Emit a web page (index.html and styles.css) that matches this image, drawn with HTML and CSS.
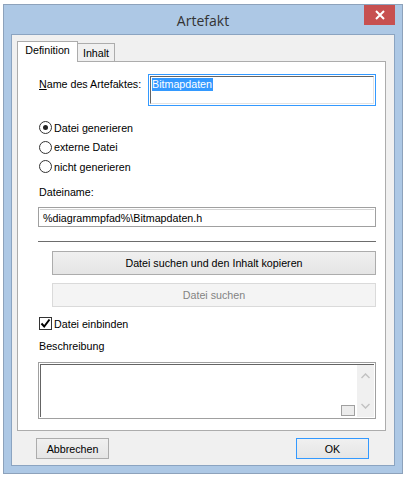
FILE: index.html
```html
<!DOCTYPE html>
<html lang="de">
<head>
<meta charset="UTF-8">
<meta name="viewport" content="width=device-width, initial-scale=1.0">
<link rel="stylesheet" href="styles.css">
</head>
<body>
<div class="window">
    <div class="titlebar">
        <span class="title">Artefakt</span>
        <div class="close">
            <svg width="10" height="10" viewBox="0 0 10 10"><path d="M1 1 L9 9 M9 1 L1 9" stroke="#fff" stroke-width="2"/></svg>
        </div>
    </div>
    <div class="client">
        <div class="tabs">
            <div class="tab active">Definition</div>
            <div class="tab">Inhalt</div>
        </div>
        <div class="panel">
            <div class="name-row">
                <div class="name-label"><u>N</u>ame des Artefaktes:</div>
                <div class="field focus name-field">
                    <div class="field-inner"><span class="sel">Bitmapdaten</span></div>
                </div>
            </div>

            <div class="radios">
                <div class="radio"><span class="circle checked"></span>Datei generieren</div>
                <div class="radio"><span class="circle"></span>externe Datei</div>
                <div class="radio"><span class="circle"></span>nicht generieren</div>
            </div>

            <div class="label file-label">Dateiname:</div>
            <div class="field file-field">
                <div class="field-inner">%diagrammpfad%\Bitmapdaten.h</div>
            </div>

            <div class="sep"></div>

            <div class="btn wide first">Datei suchen und den Inhalt kopieren</div>
            <div class="btn wide disabled">Datei suchen</div>

            <div class="check">
                <span class="box">
                    <svg width="11" height="11" viewBox="0 0 11 11"><path d="M1.5 5.5 L4.2 8.5 L9.5 1.5" stroke="#000" stroke-width="2" fill="none"/></svg>
                </span>Datei einbinden
            </div>

            <div class="label desc-label">Beschreibung</div>
            <div class="field memo">
                <div class="field-inner memo-inner">
                    <div class="memo-text"></div>
                    <div class="scrollbar">
                        <svg width="9" height="6" viewBox="0 0 9 6"><path d="M0.5 5 L4.5 1 L8.5 5" stroke="#c2c2c2" stroke-width="1.5" fill="none"/></svg>
                        <svg width="9" height="6" viewBox="0 0 9 6"><path d="M0.5 1 L4.5 5 L8.5 1" stroke="#c2c2c2" stroke-width="1.5" fill="none"/></svg>
                    </div>
                    <div class="grip"></div>
                </div>
            </div>
        </div>

        <div class="footer">
            <div class="btn small">Abbrechen</div>
            <div class="btn small default">OK</div>
        </div>
    </div>
</div>
</body>
</html>
```

FILE: styles.css
```css
* {
   box-sizing: border-box;
}

body {
   margin: 0;
   background: #fff;
   font-family: "Liberation Sans", Arial, sans-serif;
   font-size: 10.7px;
   color: #000;
}

.window {
   width: 400px;
   height: 470px;
   margin: 4px 0 0 3px;
   border: 1px solid #8da2bb;
   background: #adc8e5;
   padding: 0 7px 7px 7px;
}

.titlebar {
   height: 29px;
   display: grid;
   grid-template-columns: 31px 1fr 31px;
}

.title {
   grid-column: 2;
   text-align: center;
   font-family: "Open Sans", sans-serif;
   font-size: 14px;
   line-height: 29px;
   padding-top: 1px;
   color: #333;
}

.close {
   grid-column: 3;
   height: 20px;
   background: #c75050;
   display: flex;
   align-items: center;
   justify-content: center;
}

.client {
   height: 432px;
   border: 1px solid #8ba4c1;
   background: #f0f0f0;
   padding: 0 8px 0 5px;
}

.tabs {
   display: flex;
   align-items: flex-end;
   height: 20px;
   margin-top: 6px;
}

.tab {
   border: 1px solid #acacac;
   border-bottom: none;
   height: 18px;
   width: 38px;
   text-align: center;
   line-height: 17px;
   background: #f0f0f0;
   padding-top: 1px;
}

.tab.active {
   position: relative;
   z-index: 1;
   width: 61px;
   height: 21px;
   margin-bottom: -1px;
   margin-right: -1px;
   background: #fff;
   padding-top: 0;
   line-height: 17px;
}

.panel {
   height: 370px;
   border: 1px solid #acacac;
   background: #fff;
   padding: 0 9px 0 20px;
}

.name-row {
   display: flex;
   padding-top: 12px;
}

.name-label {
   width: 110px;
   padding: 4px 0 0 1px;
   line-height: 13px;
}

.field {
   border: 1px solid #a0a0a0;
   padding: 1px;
   background: #fff;
}

.field.focus {
   border-color: #3399ff;
}

.field-inner {
   height: 100%;
   border-top: 1px solid #646464;
   border-left: 1px solid #646464;
   border-right: 1px solid #e3e3e3;
   border-bottom: 1px solid #e3e3e3;
   padding: 1px 0 0 1px;
   line-height: 13px;
   white-space: nowrap;
}

.name-field {
   width: 228px;
   height: 32px;
}

.sel {
   display: inline-block;
   background: #3399ff;
   color: #fff;
   line-height: 13px;
   padding: 0 1px 0 0;
}

.radios {
   margin-top: 12px;
}

.radio {
   height: 19.5px;
   display: flex;
   align-items: center;
}

.circle {
   width: 13px;
   height: 13px;
   border: 1px solid #333;
   border-radius: 50%;
   background: #fff;
   margin: 0 2px 0 1px;
   display: flex;
   align-items: center;
   justify-content: center;
}

.circle.checked::after {
   content: "";
   width: 5px;
   height: 5px;
   border-radius: 50%;
   background: #222;
}

.label {
   line-height: 14px;
   padding-left: 1px;
}

.file-label {
   margin-top: 8.5px;
}

.file-field {
   margin-top: 8px;
   height: 20px;
}

.file-field .field-inner {
   border: none;
   padding: 1px 0 0 3px;
   line-height: 14px;
   border-top: 1px solid #d5d5d5;
}

.sep {
   margin-top: 14px;
   height: 1px;
   background: #6d6d6d;
}

.btn {
   display: flex;
   align-items: center;
   justify-content: center;
   border: 1px solid #acacac;
   background: linear-gradient(#f0f0f0, #e5e5e5);
}

.btn.wide {
   height: 24px;
   margin-left: 14px;
}

.btn.first {
   margin-top: 9px;
}

.btn.disabled {
   margin-top: 8px;
   background: #f4f4f4;
   border-color: #dadada;
   color: #838383;
}

.check {
   margin-top: 9px;
   height: 15px;
   display: flex;
   align-items: center;
}

.box {
   width: 13px;
   height: 13px;
   border: 1px solid #333;
   background: #fff;
   margin: 0 2px 0 1px;
   display: flex;
   align-items: center;
   justify-content: center;
}

.desc-label {
   margin-top: 8px;
}

.memo {
   margin-top: 9px;
   height: 57px;
}

.memo-inner {
   display: flex;
   position: relative;
   padding: 0;
   border-right: none;
   border-bottom: none;
}

.memo-text {
   flex: 1;
}

.scrollbar {
   width: 17px;
   background: #f0f0f0;
   display: flex;
   flex-direction: column;
   align-items: center;
   justify-content: space-between;
   padding: 8px 0 8px 0;
}

.grip {
   position: absolute;
   right: 19px;
   bottom: 1px;
   width: 14px;
   height: 11px;
   border: 1px solid #a0a0a0;
   background: #ececec;
}

.footer {
   display: flex;
   justify-content: space-between;
   margin-top: 7px;
   padding: 0 17px 0 19px;
}

.btn.small {
   width: 73px;
   height: 21px;
}

.btn.default {
   border-color: #3399ff;
}
```
